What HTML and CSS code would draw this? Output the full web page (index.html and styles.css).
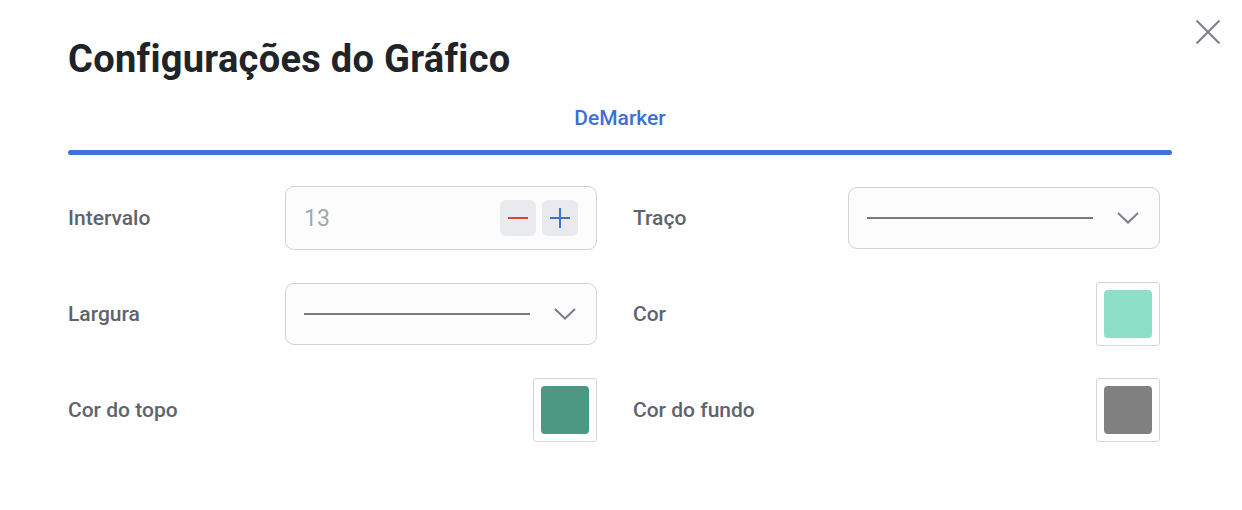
FILE: index.html
```html
<!DOCTYPE html>
<html lang="pt">
<head>
<meta charset="utf-8">
<link rel="stylesheet" href="styles.css">
</head>
<body>
<div class="modal">
  <button class="close" aria-label="Fechar">
    <svg width="26" height="26" viewBox="0 0 26 26"><path d="M1.5 1.5L24.5 24.5M24.5 1.5L1.5 24.5" stroke="#7b7f88" stroke-width="2" fill="none"/></svg>
  </button>
  <h1 class="title">Configurações do Gráfico</h1>
  <div class="tabs">
    <div class="tab">DeMarker</div>
    <div class="tab-bar"></div>
  </div>
  <div class="grid">
    <div class="field">
      <span class="label">Intervalo</span>
      <div class="control number">
        <span class="value">13</span>
        <div class="steps">
          <span class="step"><svg width="22" height="22" viewBox="0 0 22 22"><path d="M1 11H21" stroke="#d3492d" stroke-width="2"/></svg></span>
          <span class="step"><svg width="22" height="22" viewBox="0 0 22 22"><path d="M1 11H21M11 1V21" stroke="#3d72d4" stroke-width="2"/></svg></span>
        </div>
      </div>
    </div>
    <div class="field">
      <span class="label">Traço</span>
      <div class="control select">
        <span class="line"></span>
        <svg class="chev" width="22" height="12" viewBox="0 0 22 12"><path d="M1 1L11 10.5L21 1" stroke="#7b7f88" stroke-width="2" fill="none"/></svg>
      </div>
    </div>
    <div class="field">
      <span class="label">Largura</span>
      <div class="control select">
        <span class="line"></span>
        <svg class="chev" width="22" height="12" viewBox="0 0 22 12"><path d="M1 1L11 10.5L21 1" stroke="#7b7f88" stroke-width="2" fill="none"/></svg>
      </div>
    </div>
    <div class="field">
      <span class="label">Cor</span>
      <div class="swatch-box"><span class="swatch light"></span></div>
    </div>
    <div class="field">
      <span class="label">Cor do topo</span>
      <div class="swatch-box"><span class="swatch dark"></span></div>
    </div>
    <div class="field">
      <span class="label">Cor do fundo</span>
      <div class="swatch-box"><span class="swatch gray"></span></div>
    </div>
  </div>
</div>
</body>
</html>
```
FILE: styles.css
```css
* { box-sizing: border-box; }
html, body { margin: 0; padding: 0; background: #fff; }
body { font-family: Roboto, "Liberation Sans", sans-serif; }
.modal {
  position: relative;
  width: 1242px;
  height: 510px;
  padding: 36px 70px 0 68px;
}
.close {
  position: absolute;
  top: 19px;
  right: 21px;
  width: 26px;
  height: 26px;
  padding: 0;
  border: 0;
  background: none;
  display: flex;
}
.title {
  margin: 0;
  font-size: 38px;
  font-weight: 700;
  color: #202328;
  line-height: 46px;
  letter-spacing: 0.3px;
}
.tabs {
  margin-top: 23px;
  display: flex;
  flex-direction: column;
  align-items: center;
}
.tab {
  font-size: 21px;
  font-weight: 500;
  color: #3d6fd6;
  line-height: 26px;
}
.tab-bar {
  margin-top: 19px;
  width: 100%;
  height: 5px;
  border-radius: 3px;
  background: #3d72d8;
}
.grid {
  margin-top: 31px;
  width: 1092px;
  display: grid;
  grid-template-columns: 529px 527px;
  column-gap: 36px;
  row-gap: 32px;
}
.field {
  display: flex;
  align-items: center;
  justify-content: space-between;
  height: 64px;
}
.label {
  font-size: 21px;
  font-weight: 500;
  color: #5f636e;
}
.control {
  width: 312px;
  height: 64px;
  border: 1px solid #d2d3d9;
  border-radius: 9px;
  background: #fcfcfc;
  display: flex;
  align-items: center;
}
.number { padding: 0 18px 0 18px; justify-content: space-between; }
.value { font-size: 23px; color: #a3a7ae; }
.steps { display: flex; gap: 6px; }
.step {
  width: 36px;
  height: 36px;
  border-radius: 6px;
  background: #e9eaed;
  display: flex;
  align-items: center;
  justify-content: center;
}
.select { height: 62px; padding: 0 20px 0 18px; justify-content: space-between; }
.line { width: 226px; height: 2px; background: #777a80; }
.swatch-box {
  width: 64px;
  height: 64px;
  border: 1px solid #d4d5da;
  border-radius: 3px;
  padding: 7px;
  background: #fff;
}
.swatch { display: block; width: 100%; height: 100%; border-radius: 4px; }
.light { background: #8ddfc8; }
.dark { background: #4c9880; }
.gray { background: #808080; }
```
